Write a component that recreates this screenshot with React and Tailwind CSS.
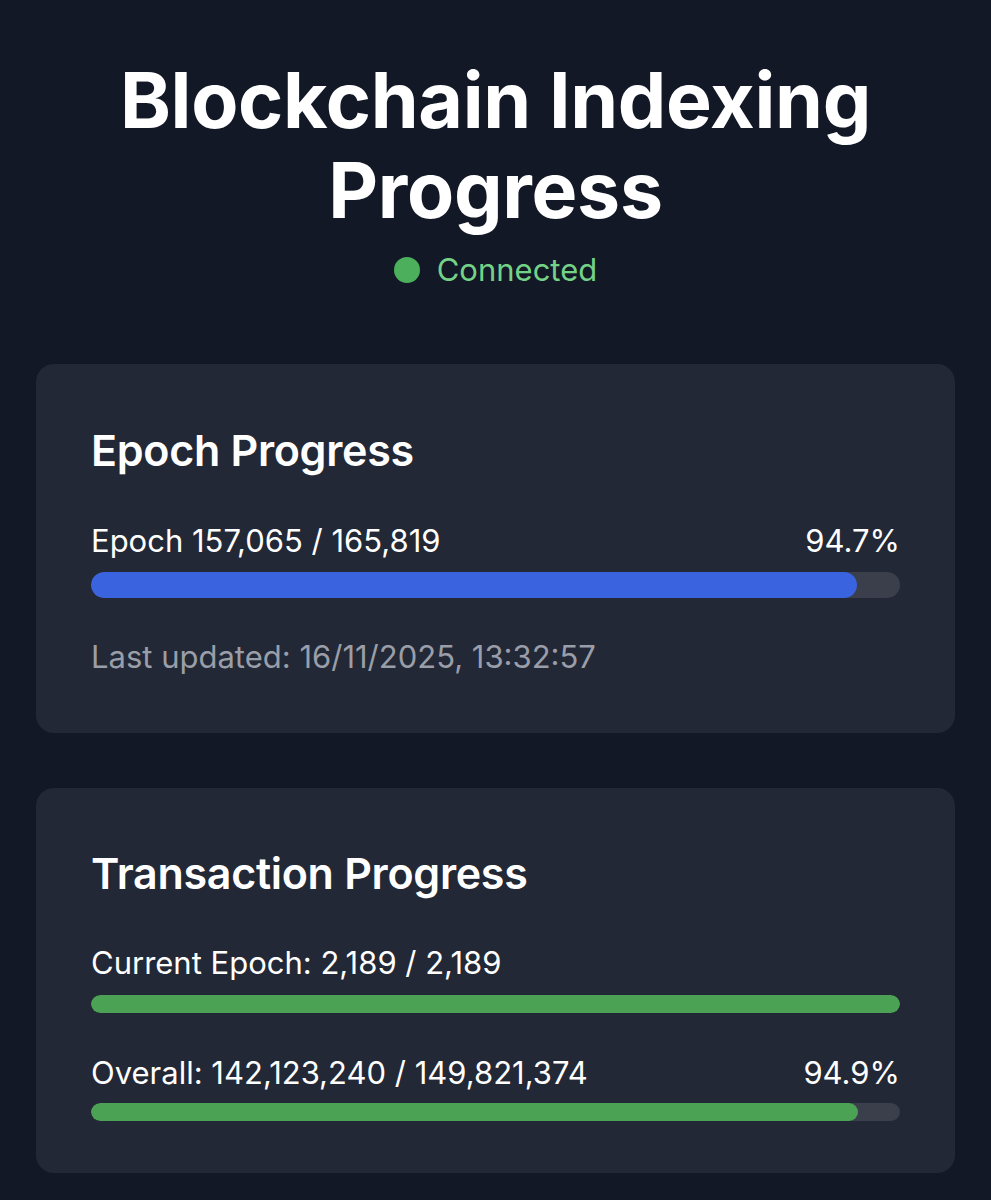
export default function App() {
  const epoch = { current: 157065, total: 165819 };
  const tx = { epochDone: 2189, epochTotal: 2189, done: 142123240, total: 149821374 };
  const fmt = (n) => n.toLocaleString("en-US");
  const epochPct = (epoch.current / epoch.total) * 100;
  const txPct = (tx.done / tx.total) * 100;

  return (
    <div
      className="min-h-[1200px] bg-[#131826] px-9 pt-[55px] pb-10 text-white"
      style={{ fontFamily: "Inter, 'Noto Sans', sans-serif" }}
    >
      <header className="flex flex-col items-center">
        <h1 className="text-center text-[77px] font-bold leading-[90px] tracking-[-0.3px]">
          Blockchain Indexing
          <br />
          Progress
        </h1>
        <div className="mt-[17px] flex h-9 items-center gap-[17px]">
          <span className="h-[26px] w-[26px] rounded-full bg-[#4caf5c]" />
          <span className="text-[31px] text-[#74d287]">Connected</span>
        </div>
      </header>

      <section className="mt-[76px] rounded-[18px] bg-[#222836] px-[55px] pt-[58px] pb-[58px]">
        <h2 className="text-[43px] font-semibold leading-[56px] tracking-[-0.3px]">Epoch Progress</h2>
        <div className="mt-[45px] flex h-9 items-center justify-between text-[31px]">
          <span>
            Epoch {fmt(epoch.current)} / {fmt(epoch.total)}
          </span>
          <span>{epochPct.toFixed(1)}%</span>
        </div>
        <div className="mt-[13px] h-[26px] w-full overflow-hidden rounded-full bg-[#3a3f4b]">
          <div className="h-full rounded-full bg-[#3a63e0]" style={{ width: `${epochPct}%` }} />
        </div>
        <p className="mt-[41px] h-9 text-[31px] leading-9 text-[#9a9ea8]">
          Last updated: 16/11/2025, 13:32:57
        </p>
      </section>

      <section className="mt-[55px] rounded-[18px] bg-[#222836] px-[55px] pt-[57px] pb-[52px]">
        <h2 className="text-[43px] font-semibold leading-[56px] tracking-[-0.3px]">Transaction Progress</h2>
        <div className="mt-[44px] flex h-9 items-center text-[31px]">
          <span>
            Current Epoch: {fmt(tx.epochDone)} / {fmt(tx.epochTotal)}
          </span>
        </div>
        <div className="mt-[14px] h-[18px] w-full overflow-hidden rounded-full bg-[#3a3f4b]">
          <div className="h-full rounded-full bg-[#4ca254]" style={{ width: "100%" }} />
        </div>
        <div className="mt-[42px] flex h-9 items-center justify-between text-[31px]">
          <span>
            Overall: {fmt(tx.done)} / {fmt(tx.total)}
          </span>
          <span>{txPct.toFixed(1)}%</span>
        </div>
        <div className="mt-[12px] h-[18px] w-full overflow-hidden rounded-full bg-[#3a3f4b]">
          <div className="h-full rounded-full bg-[#4ca254]" style={{ width: `${txPct}%` }} />
        </div>
      </section>
    </div>
  );
}
